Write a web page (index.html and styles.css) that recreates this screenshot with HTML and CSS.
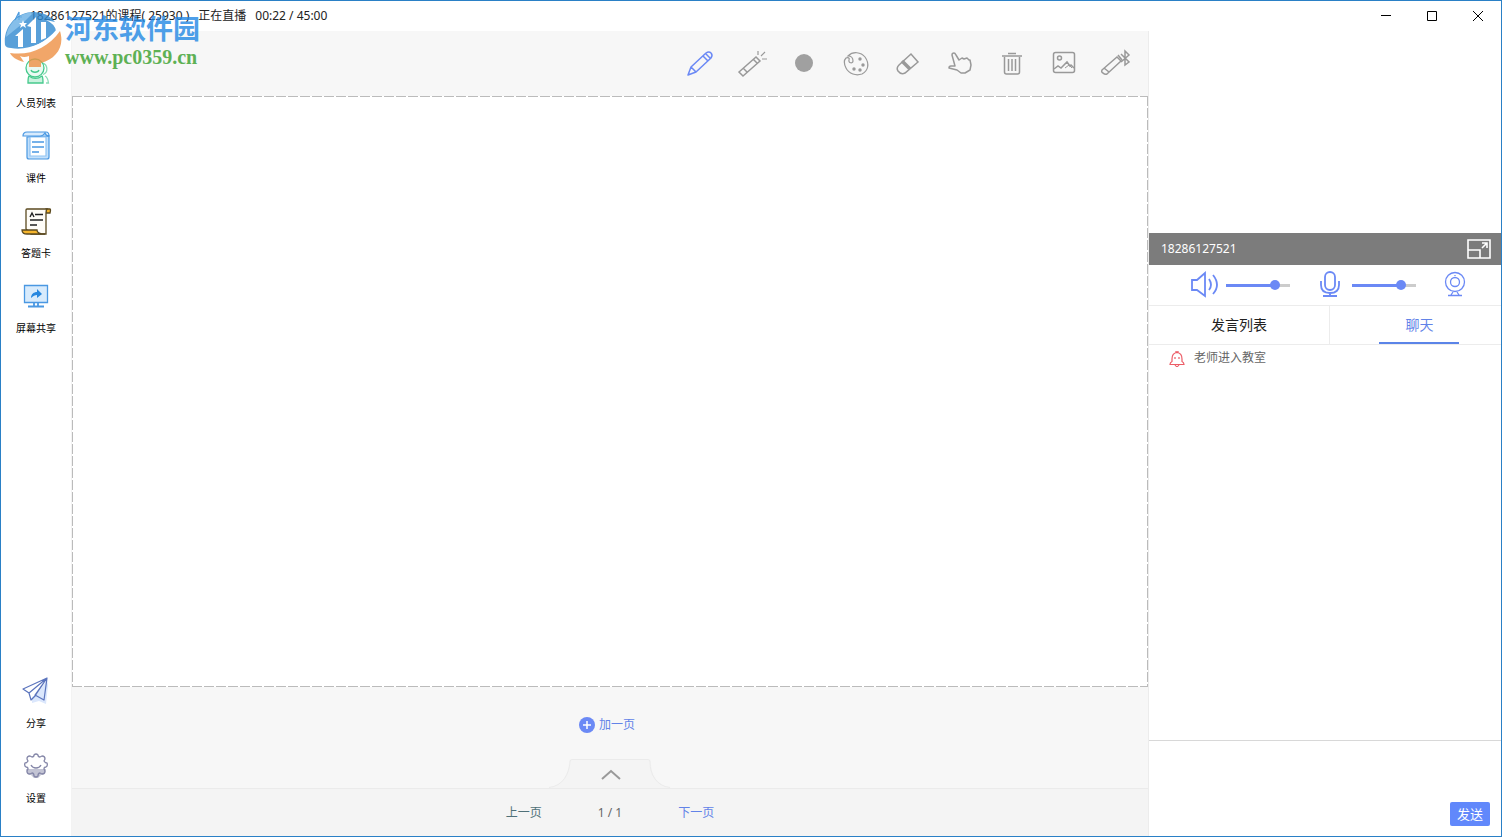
FILE: index.html
```
<!DOCTYPE html>
<html lang="zh-CN">
<head>
<meta charset="utf-8">
<title>正在直播</title>
<link rel="stylesheet" href="styles.css">
</head>
<body>
<div class="window">
  <header class="titlebar">
    <svg class="app-icon" viewBox="0 0 16 16" width="16" height="16" fill="none" stroke="#4c9be0" stroke-width="1.2"><path d="M5 12 9 4v8M6 9h6"/></svg>
    <h1 class="title"><span>18286127521的课程( 25930 )</span><span>正在直播</span><span>00:22 / 45:00</span></h1>
    <div class="window-buttons">
      <button type="button" aria-label="最小化"><svg viewBox="0 0 12 12" width="12" height="12"><path d="M1 5.500h10"/></svg></button>
      <button type="button" aria-label="最大化"><svg viewBox="0 0 12 12" width="12" height="12"><path d="M1.500 1.500h9v9h-9z"/></svg></button>
      <button type="button" aria-label="关闭"><svg viewBox="0 0 12 12" width="12" height="12"><path d="m1 1 10 10M11 1 1 11"/></svg></button>
    </div>
  </header>

  <div class="body">
    <nav class="sidebar">
      <div class="side-group">
        <button type="button" class="side-item">
          <svg viewBox="0 0 32 32" width="32" height="32" fill="none" stroke="#45c98c" stroke-width="1.300">
            <path d="M22 8a6 6 0 0 1 1 11.500M25 21c2 1 3 3 3.500 7h-2.500" stroke="#8bdcb6"/>
            <circle cx="15" cy="13" r="9" fill="#eafaf2"/>
            <path d="M11 15c1 3 7 3 8 0"/>
            <path d="M9 21c-1 1-1 4-1 7h15c0-3 0-6-1-7-4 3-9 3-13 0z" fill="#c9f2de"/>
          </svg>
          <span>人员列表</span>
        </button>
        <button type="button" class="side-item">
          <svg viewBox="0 0 32 32" width="32" height="32" fill="none" stroke="#4a98e2" stroke-width="1.200">
            <path d="M7 7v20q0 2 2 2h18q2 0 2-2V6z" fill="#c3e0fb"/>
            <path d="M10 7v19h16V7z" fill="#fff" stroke="#8fc3f3"/>
            <path d="M7 6H3q0-4 4-4h19q3 0 3 4-3 0-4-3-2 3-5 3z" fill="#d8ebfd"/>
            <path d="M12 12h12M12 17h12M12 22h7" stroke-width="1.600"/>
          </svg>
          <span>课件</span>
        </button>
        <button type="button" class="side-item">
          <svg viewBox="0 0 32 32" width="32" height="32" fill="none" stroke="#5b4a20" stroke-width="1.300">
            <path d="M26 4h4q1 0 0 4h-4z" fill="#f5b52d"/>
            <path d="M6 5q0-1 1-1h20q-1 1-1 4v21H11L6 24z" fill="#fffdf8"/>
            <path d="M2 25h15c0 2 2 4 8 4H7c-3 0-5-1-5-4z" fill="#f5b52d"/>
            <path d="m10 12 2-4 2 4M15 9.500h8M10 15h13M10 20h7" stroke="#222" stroke-width="1.400"/>
          </svg>
          <span>答题卡</span>
        </button>
        <button type="button" class="side-item">
          <svg viewBox="0 0 32 32" width="32" height="32" fill="none" stroke="#4a98e2" stroke-width="1.300">
            <path d="M4.500 5.500h23v17h-23z" fill="#d8ebfc"/>
            <path d="M14 23v3M18 23v3M8 26.500h16" stroke-width="1.800"/>
            <path d="M11 18c0-4 3-6 6-6V9l5 5-5 4v-3c-2 0-4 1-6 3z" fill="#2687df" stroke="none"/>
          </svg>
          <span>屏幕共享</span>
        </button>
      </div>
      <div class="side-group">
        <button type="button" class="side-item">
          <svg viewBox="0 0 32 32" width="32" height="32" fill="none" stroke="#5b74bd" stroke-width="1.200" stroke-linejoin="round">
            <path d="m17 19 10-14 1 5-2 19-7-3-7 2v-6z" fill="#dbe7fc" stroke="none"/>
            <path d="M27 3 3 14l6 4zM27 3 9 18l2 7 4-4zM27 3 15 20l9 5z"/>
          </svg>
          <span>分享</span>
        </button>
        <button type="button" class="side-item">
          <svg viewBox="0 0 32 32" width="32" height="32" fill="none" stroke="#8587a8" stroke-width="1.300" stroke-linejoin="round">
            <path d="M6 19h20l-1 5-4 1-3 3h-4l-3-3-4-1z" fill="#c3c4d4" stroke="none"/>
            <path d="M12 7q2 0 2-2 2-2 4 0 0 2 2 2l2-1q3 0 3 3l-1 2q1 2 3 2 1 3-1 4-2 0-2 2l1 2q0 3-3 3l-2-1q-2 0-2 3-2 2-4 0 0-3-2-3l-2 1q-3 0-3-3l1-2q0-2-2-2-2-1-1-4 2 0 3-2L7 9q0-3 3-3z"/>
            <path d="M11 15c2 4 8 4 10 0"/>
          </svg>
          <span>设置</span>
        </button>
      </div>
    </nav>

    <main class="stage">
      <div class="toolbar">
        <button type="button" aria-label="画笔" class="active"><svg viewBox="0 0 32 32" width="32" height="32" stroke-linejoin="round"><path d="m4 27 3-8L22 5q3-2 5 0 2 2 0 5L12 24zM7 19l5 5M19 8l5 5M22 6l4 4"/></svg></button>
        <button type="button" aria-label="激光笔"><svg viewBox="0 0 32 32" width="32" height="32"><path d="M3 24 20 9l4 4L7 28zM7 20l4 4M17 11l4 4"/><path d="M22 7V3M25 8l4-4M26 11h5" stroke-width="1.200"/></svg></button>
        <button type="button" aria-label="粗细"><svg viewBox="0 0 32 32" width="32" height="32"><circle cx="16" cy="15" r="9" fill="#a0a0a0" stroke="none"/></svg></button>
        <button type="button" aria-label="颜色"><svg viewBox="0 0 32 32" width="32" height="32"><path d="M8 8C13 3 21 4 25 9c5 7 3 14-3 17-6 2-13 0-16-6-2-4-2-8 0-10 2-1 4 0 3 2-1 3 4 4 4 1 0-3-2-5-5-5z" stroke-width="1.200"/><g fill="#999" stroke="none"><circle cx="20" cy="11" r="1.700"/><circle cx="23" cy="17" r="1.700"/><circle cx="20" cy="22" r="1.700"/><circle cx="14" cy="21" r="1.700"/></g></svg></button>
        <button type="button" aria-label="橡皮擦"><svg viewBox="0 0 32 32" width="32" height="32"><path d="M19 6 7 17q-3 3-1 6 3 4 7 2L26 14z"/><path d="m10 13 8 8" stroke-width="3.500"/></svg></button>
        <button type="button" aria-label="手势"><svg viewBox="0 0 32 32" width="32" height="32" stroke-linejoin="round"><path d="M11 18 8 7q0-2 2-2 1 0 2 2l3 5 3-2 2 1 3-1 2 2 1 0 1 5-1 5-5 3h-4l-4-3-8-2q0-2 2-2z"/></svg></button>
        <button type="button" aria-label="删除"><svg viewBox="0 0 32 32" width="32" height="32"><path d="M6 8h20M12 5.500h8M8.500 9v15q0 2 2 2h11q2 0 2-2V9M12.500 11v12M16 11v12M19.500 11v12"/></svg></button>
        <button type="button" aria-label="图片"><svg viewBox="0 0 32 32" width="32" height="32"><rect x="5.500" y="4.500" width="21" height="20" rx="2"/><circle cx="11.500" cy="10" r="2"/><path d="m6 21 4-3 3 2 6-6 3 4 1-1 3 3"/><path d="m17 20 4-3 3 3" stroke-width="1"/></svg></button>
        <button type="button" aria-label="蓝牙笔"><svg viewBox="0 0 32 32" width="32" height="32"><path d="M2 22 17 9l4 4L7 26q-2 1-4-1-2-1-1-3zM4 20l5 4"/><path d="m18 7 4 5M21 6l8 8-4 3V3l4 4-8 7"/></svg></button>
      </div>

      <section class="board" aria-label="白板"></section>

      <div class="add-row">
        <button type="button" class="add-page">
          <svg viewBox="0 0 16 16" width="16" height="16"><circle cx="8" cy="8" r="8" fill="#6b89f5"/><path d="M4 8h8M8 4v8" stroke="#fff" stroke-width="1.500"/></svg>
          <span>加一页</span>
        </button>
        <button type="button" class="drawer" aria-label="展开">
          <svg viewBox="0 0 122 30" width="122" height="30" fill="none">
            <path d="M0 30C14 28 20 16 20 4q0-3 3-3h76q3 0 3 3c0 12 6 24 20 26z" fill="#f4f4f4"/>
            <path d="M0 29.500C14 28 20 16 21 4q0-2.500 2-2.500h76q2 0 2 2.500c0 12 6 24 20 25.500" stroke="#ebebeb"/>
            <path d="m53 21 9-8 9 8" stroke="#999" stroke-width="2"/>
          </svg>
        </button>
      </div>

      <div class="pager">
        <button type="button" class="prev">上一页</button>
        <span>1 / 1</span>
        <button type="button" class="next">下一页</button>
      </div>
    </main>

    <aside class="panel">
      <div class="video"></div>
      <div class="name-bar">
        <span>18286127521</span>
        <button type="button" aria-label="放大"><svg viewBox="0 0 24 20" width="24" height="20" fill="none" stroke="#fff" stroke-width="1.600"><path d="M1 1h22v18H1zM1 11h12v8M15 9l5-5M15 4h5v5"/></svg></button>
      </div>
      <div class="devices">
        <label class="device">
          <svg viewBox="0 0 28 28" width="28" height="28"><path d="M2 9h5l8-7v23l-8-6H2zM19 8q4 6 0 11M23 4q8 10 0 19"/></svg>
          <input type="range" min="0" max="100" value="82" aria-label="音量">
        </label>
        <label class="device">
          <svg viewBox="0 0 28 28" width="28" height="28"><rect x="9" y="1" width="10" height="18" rx="5"/><path d="M5 10v4q0 8 9 8t9-8v-4M14 22v3M7 25h14"/></svg>
          <input type="range" min="0" max="100" value="82" aria-label="麦克风">
        </label>
        <button type="button" class="camera" aria-label="摄像头"><svg viewBox="0 0 28 28" width="28" height="28"><g stroke-width="1.300"><circle cx="13" cy="11" r="9.500"/><circle cx="13" cy="11" r="4.500"/><path d="M11 21 9 24M15 21l2 3M6 24.500h14M13 4v1"/></g></svg></button>
      </div>
      <div class="tabs" role="tablist">
        <button type="button" role="tab" aria-selected="false">发言列表</button>
        <button type="button" role="tab" aria-selected="true">聊天</button>
      </div>
      <div class="messages">
        <p class="notice">
          <svg viewBox="0 0 16 16" width="16" height="16" fill="none" stroke="#ec5c66" stroke-width="1.200"><path d="M1 13.500q0-2 2-3V8q0-6 5-6.500Q13 2 13 8v2.500q2 1 2 3zM7 1.500V0h2v1.500M6 14q2 3 4 0M6 6v2M10 6v2"/></svg>
          <span>老师进入教室</span>
        </p>
      </div>
      <form class="composer">
        <textarea aria-label="聊天内容"></textarea>
        <button type="button" class="send">发送</button>
      </form>
    </aside>
  </div>

  <div class="watermark">
    <svg viewBox="0 0 60 58" width="60" height="58">
      <path d="M2 35C0 17 13 2 31 2q13 0 21 10l-9-2q9 4 10 11C43 33 24 41 8 38q-5 0-6-3z" fill="#3089d0"/>
      <path d="M3 27C5 13 16 3 31 2L19 14z" fill="#68b0e5"/>
      <path d="m12 26 8-7v18h-5V26zM24 16l9-9v26h-5V17zM38 12h5v16l-5 2z" fill="#fff"/>
      <path d="m20 10 1 3h3l-2 2 1 3-3-2-3 2 1-3-2-2h3z" fill="#fff"/>
      <path d="M2 38c18 5 38-2 52-19l3 2C43 40 22 46 5 43z" fill="#fff"/>
      <path d="M57 21c5 16-4 28-19 32v4H26V46q-5 2-9 0l4 6C13 50 9 47 7 43c20 3 38-5 50-22z" fill="#ee9144"/>
    </svg>
    <div class="watermark-text">
      <strong>河东软件园</strong>
      <span>www.pc0359.cn</span>
    </div>
  </div>
</div>
</body>
</html>
```
FILE: styles.css
```
* {
  box-sizing: border-box;
}

body {
  margin: 0;
  font: 12px/16px "Noto Sans", "Noto Sans CJK SC", sans-serif;
  color: #222;
}

button {
  margin: 0;
  padding: 0;
  border: 0;
  background: none;
  font: inherit;
  color: inherit;
}

svg {
  display: block;
  flex: none;
}

.window {
  position: relative;
  display: flex;
  flex-direction: column;
  height: 100vh;
  border: 1px solid #2a80c6;
  background: #fff;
}

.titlebar {
  display: flex;
  align-items: center;
  height: 30px;
  padding-left: 9px;
}

.title {
  display: flex;
  flex: 1;
  gap: 9px;
  margin: 0 0 0 4px;
  font-size: 12px;
  font-weight: 400;
}

.window-buttons {
  display: flex;
}

.window-buttons button {
  display: flex;
  align-items: center;
  justify-content: center;
  width: 46px;
  height: 28px;
}

.window-buttons svg {
  fill: none;
  stroke: #000;
}

.body {
  display: flex;
  flex: 1;
  min-height: 0;
}

.sidebar {
  display: flex;
  flex-direction: column;
  justify-content: space-between;
  width: 71px;
  padding: 24px 0 30px;
  border-right: 1px solid #f3f3f3;
}

.side-group {
  display: grid;
  gap: 19px;
}

.side-item {
  display: grid;
  justify-items: center;
  gap: 8px;
  font-size: 10px;
  color: #000;
}

.stage {
  display: flex;
  flex: 1;
  flex-direction: column;
  min-width: 0;
  background: #f7f7f7;
}

.toolbar {
  display: flex;
  justify-content: flex-end;
  align-items: center;
  gap: 20px;
  height: 65px;
  padding-right: 16px;
}

.toolbar svg {
  fill: none;
  stroke: #999;
  stroke-width: 1.5;
}

.toolbar .active svg {
  stroke: #6b89f5;
}

.board {
  --across: repeating-linear-gradient(90deg, #bbb 0 10px, transparent 10px 12px);
  --down: repeating-linear-gradient(#bbb 0 10px, transparent 10px 12px);
  flex: 1;
  background:
    var(--across) top / 100% 1px no-repeat,
    var(--across) bottom / 100% 1px no-repeat,
    var(--down) left / 1px 100% no-repeat,
    var(--down) right / 1px 100% no-repeat,
    #fff;
}

.add-row {
  display: flex;
  flex-direction: column;
  align-items: center;
  justify-content: space-between;
  height: 101px;
  padding-top: 30px;
}

.add-page {
  display: flex;
  gap: 4px;
  margin-right: 6px;
  color: #6283e8;
}

.pager {
  display: flex;
  align-items: center;
  justify-content: center;
  gap: 56px;
  height: 48px;
  border-top: 1px solid #ebebeb;
  background: #f4f4f4;
  color: #666;
}

.prev {
  color: #4f7078;
}

.next {
  color: #6283e8;
}

.panel {
  display: flex;
  flex-direction: column;
  width: 353px;
  border-left: 1px solid #ececec;
}

.video {
  height: 202px;
}

.name-bar {
  display: flex;
  align-items: center;
  justify-content: space-between;
  height: 32px;
  padding: 0 10px 0 12px;
  background: #7c7c7c;
  color: #fff;
}

.devices {
  display: flex;
  align-items: center;
  justify-content: space-between;
  height: 41px;
  padding: 0 31px 0 41px;
  border-bottom: 1px solid #ececec;
}

.devices svg {
  fill: none;
  stroke: #6b89f5;
  stroke-width: 1.8;
}

.device {
  display: flex;
  align-items: center;
  gap: 8px;
}

.device input {
  appearance: none;
  width: 64px;
  height: 10px;
  margin: 0;
  background: linear-gradient(90deg, #6b89f5 77%, #ccc 77%) center / 100% 3px no-repeat;
}

.device input::-webkit-slider-thumb {
  appearance: none;
  width: 10px;
  height: 10px;
  border-radius: 50%;
  background: #6b89f5;
}

.tabs {
  display: flex;
  height: 39px;
  border-bottom: 1px solid #ececec;
}

.tabs button {
  flex: 1;
  font-size: 14px;
}

.tabs button:first-child {
  flex: none;
  width: 181px;
  border-right: 1px solid #ececec;
}

.tabs [aria-selected="true"] {
  padding-left: 8px;
  background: linear-gradient(#5b84e8, #5b84e8) 49px bottom / 80px 2px no-repeat;
  color: #6283e8;
}

.messages {
  flex: 1;
  padding: 5px 20px;
}

.notice {
  display: flex;
  gap: 9px;
  margin: 0;
  color: #666;
}

.notice svg {
  margin-top: 1px;
}

.composer {
  display: flex;
  flex-direction: column;
  align-items: flex-end;
  height: 96px;
  padding: 0 11px 10px;
  border-top: 1px solid #d8d8d8;
}

.composer textarea {
  flex: 1;
  width: 100%;
  border: 0;
  outline: 0;
  resize: none;
  font: inherit;
}

.send {
  width: 40px;
  height: 24px;
  border-radius: 2px;
  background: #6188fb;
  font-size: 13px;
  color: #fff;
}

.watermark {
  position: absolute;
  top: 9px;
  left: 2px;
  display: flex;
  gap: 2px;
  pointer-events: none;
  opacity: 0.8;
}

.watermark-text {
  display: grid;
  align-content: start;
}

.watermark strong {
  font-size: 27px;
  line-height: 37px;
  color: #2288e4;
}

.watermark span {
  font: bold 20px/20px "Liberation Serif", serif;
  color: #37a02c;
}
```
